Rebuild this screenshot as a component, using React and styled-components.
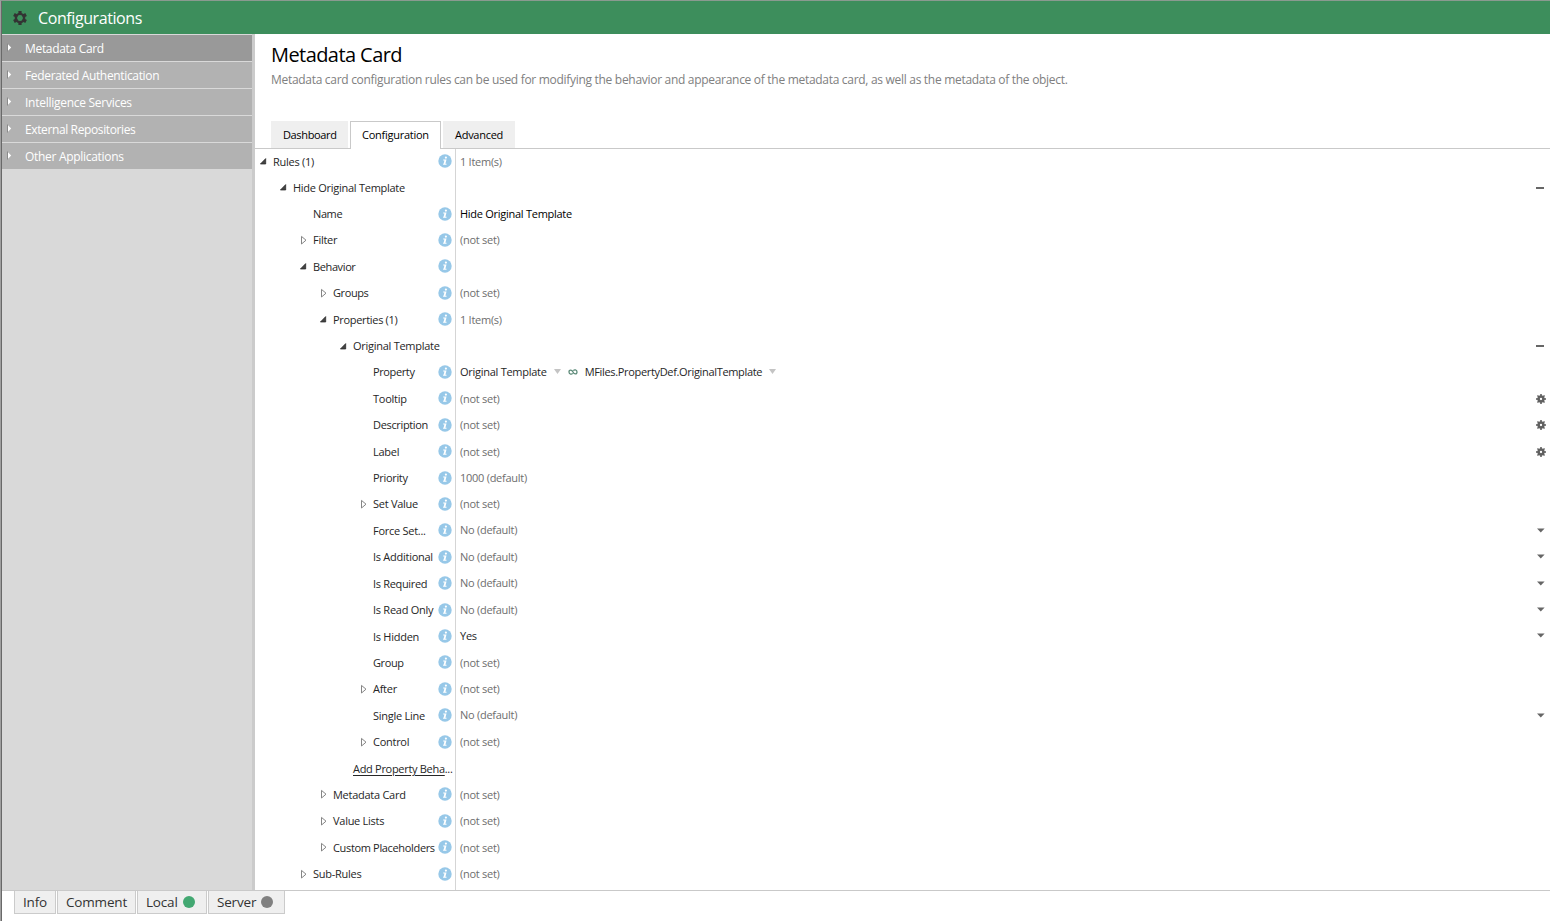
import React from 'react';
import styled, { createGlobalStyle } from 'styled-components';

const GlobalStyle = createGlobalStyle`
  *, *::before, *::after { box-sizing: border-box; }
  body { margin: 0; background: #fff; font-family: "Segoe UI", "Open Sans", sans-serif; }
`;

const Window = styled.div`
  display: flex;
  flex-direction: column;
  width: 100%;
  height: 921px;
  border-top: 1px solid #8a9a90;
  border-left: 1px solid #a0a0a0;
  box-shadow: inset 1px 0 #696969;
  padding-left: 1px;
  overflow: hidden;
`;

const Header = styled.header`
  display: flex;
  align-items: center;
  flex: none;
  height: 33px;
  padding-left: 11px;
  gap: 11px;
  background: #3d8e5c;
  color: #fff;
  font-size: 16px;
  line-height: 32px;
  letter-spacing: -0.41px;
`;

const Body = styled.div`
  display: flex;
  flex: none;
  height: 856px;
`;

const Sidebar = styled.nav`
  flex: none;
  width: 253px;
  padding-top: 1px;
  background: #d9d9d9;
  border-right: 3px solid #cbcbcb;
`;

const SidebarItem = styled.div`
  display: flex;
  align-items: center;
  height: 27px;
  padding-left: 5px;
  border-bottom: 1px solid #d9d9d9;
  background: ${(p) => (p.$active ? '#999' : '#b2b2b2')};
  background-clip: padding-box;
  color: #fff;
  font-size: 12px;
  line-height: 18px;
  padding-top: 1px;
  letter-spacing: ${(p) => p.$tracking}px;
`;

const SidebarArrow = styled.svg`
  flex: none;
  width: 6px;
  height: 9px;
  margin: -3px 12px 0 0;
`;

const Content = styled.main`
  display: flex;
  flex-direction: column;
  flex: 1;
  min-width: 0;
`;

const Title = styled.h1`
  margin: 7px 0 0 16px;
  font-size: 20px;
  font-weight: 400;
  line-height: 28px;
  letter-spacing: -0.57px;
  color: #000;
`;

const Description = styled.p`
  margin: 1px 0 0 16px;
  font-size: 12px;
  line-height: 20px;
  letter-spacing: -0.298px;
  color: #808080;
`;

const TabBar = styled.div`
  display: flex;
  align-items: flex-end;
  flex: none;
  height: 59px;
  padding-left: 16px;
  border-bottom: 1px solid #c9c9c9;
`;

const Tab = styled.div`
  width: ${(p) => p.$width}px;
  height: ${(p) => (p.$active ? 28 : 27)}px;
  margin: 0 2px ${(p) => (p.$active ? -1 : 0)}px 0;
  padding-left: ${(p) => (p.$active ? 11 : 12)}px;
  border: solid #c9c9c9;
  border-width: ${(p) => (p.$active ? '1px 1px 0' : '0')};
  background: ${(p) => (p.$active ? '#fff' : '#efefef')};
  color: #000;
  font-size: 11px;
  line-height: ${(p) => (p.$active ? 26 : 27)}px;
  white-space: nowrap;
  letter-spacing: ${(p) => p.$tracking}px;
`;

const Tree = styled.div`
  display: flex;
  flex-direction: column;
  flex: 1;
  min-height: 0;
  overflow: hidden;
`;

const Row = styled.div`
  display: flex;
  align-items: center;
  flex: none;
  height: 26.41px;
  font-size: 11px;
  line-height: 16px;
  white-space: nowrap;
  letter-spacing: -0.27px;

  &:first-child { height: 25.4px; }
`;

const NameCell = styled.div`
  display: flex;
  align-items: center;
  flex: none;
  width: 201px;
  height: 100%;
  padding-left: ${(p) => 4 + p.$depth * 20}px;
  border-right: 1px solid #d5d5d5;
`;

const TreeEnd = styled.div`
  flex: 1;
  width: 201px;
  border-right: 1px solid #d5d5d5;
`;

const Toggle = styled.svg`
  flex: none;
  width: 14px;
  height: 10px;
  margin-top: -1px;
`;

const Label = styled.span`
  flex: 1;
  min-width: 0;
  color: #262626;
  letter-spacing: ${(p) => p.$tracking || -0.27}px;
`;

const AddLink = styled.span`
  text-decoration: underline;
  text-underline-offset: 2px;
`;

const InfoIcon = styled.svg`
  flex: none;
  width: 14px;
  height: 14px;
  margin: -1px 2.6px 0 0;
`;

const ValueCell = styled.div`
  display: flex;
  align-items: center;
  flex: 1;
  padding-left: 4px;
  padding-bottom: ${(p) => (p.$raised ? 1 : 0)}px;
  color: ${(p) => p.$color};
`;

const PickerText = styled.span`
  letter-spacing: ${(p) => p.$tracking}px;
`;

const PickerArrow = styled.svg`
  width: 7px;
  height: 5px;
  margin: -1px 0 0 7px;
`;

const LinkIcon = styled.svg`
  width: 10px;
  height: 8px;
  margin: 0 7px 0 7px;
`;

const ActionCell = styled.div`
  display: flex;
  justify-content: center;
  flex: none;
  width: 10px;
  margin-right: 4px;
  padding-bottom: ${(p) => (p.$raised ? 1.2 : 0)}px;
`;

const Dash = styled.span`
  width: 8px;
  height: 2px;
  margin-right: 2px;
  background: #666;
`;

const Footer = styled.footer`
  display: flex;
  align-items: flex-start;
  gap: 1px;
  flex: 1;
  padding-left: 12px;
  border-top: 1px solid #c9c9c9;
`;

const StatusTab = styled.div`
  display: flex;
  align-items: center;
  width: ${(p) => p.$width}px;
  height: 23px;
  padding-left: 8px;
  gap: 5px;
  border: 1px solid #cbcbcb;
  border-top: 0;
  background: #efefef;
  color: #333;
  font-size: 13.5px;
  line-height: 20px;
  letter-spacing: -0.18px;
`;

const StatusDot = styled.span`
  width: 12px;
  height: 12px;
  border-radius: 50%;
  background: ${(p) => p.$color};
`;

function Gear({ size, color, teeth, radius, hole, tooth }) {
  return (
    <svg width={size} height={size} viewBox="0 0 14 14">
      {Array.from({ length: teeth }, (_, i) => (
        <rect key={i} x={7 - tooth / 2} y="0" width={tooth} height="4" fill={color}
          transform={`rotate(${(360 / teeth) * i} 7 7)`} />
      ))}
      <circle cx="7" cy="7" r={(radius + hole) / 2} fill="none" stroke={color} strokeWidth={radius - hole} />
    </svg>
  );
}

function Info() {
  return (
    <InfoIcon viewBox="0 0 14 14">
      <circle cx="7" cy="7" r="6.7" fill="#97c8e8" />
      <circle cx="7.9" cy="3.6" r="1.1" fill="#fff" />
      <path d="M5.2 5.6H8.5L7.4 9.7H8.5V10.7H5.1V9.7H5.6L6.4 6.6H5.2Z" fill="#fff" />
    </InfoIcon>
  );
}

function TreeToggle({ state }) {
  return (
    <Toggle viewBox="0 0 14 10">
      {state === 'open' && <path d="M6.7 2.6V8H1.4Z" fill="#444" stroke="#222" strokeWidth=".7" />}
      {state === 'closed' && <path d="M2.5 1.4V9L7 5.2Z" fill="#fff" stroke="#858585" />}
    </Toggle>
  );
}

function Action({ type }) {
  return (
    <ActionCell $raised={type === 'select'}>
      {type === 'remove' && <Dash />}
      {type === 'gear' && <Gear size={10} color="#606060" teeth={8} radius={5.2} hole={1.6} tooth={2.2} />}
      {type === 'select' && (
        <svg width="8" height="5" viewBox="0 0 8 5"><path d="M0 .5H7.6L3.8 4.6Z" fill="#666" /></svg>
      )}
    </ActionCell>
  );
}

function Picker({ tracking, children }) {
  return (
    <>
      <PickerText $tracking={tracking}>{children}</PickerText>
      <PickerArrow viewBox="0 0 7 5"><path d="M0 0H7L3.5 5Z" fill="#c4c4c4" /></PickerArrow>
    </>
  );
}

const sections = [
  { name: 'Metadata Card', tracking: -0.32, active: true },
  { name: 'Federated Authentication', tracking: -0.34 },
  { name: 'Intelligence Services', tracking: -0.27 },
  { name: 'External Repositories', tracking: -0.38 },
  { name: 'Other Applications', tracking: -0.3 },
];

const N = '(not set)';
const D = 'No (default)';
const rows = [
  { depth: 0, label: 'Rules (1)', toggle: 'open', value: '1 Item(s)' },
  { depth: 1, label: 'Hide Original Template', toggle: 'open', noInfo: true, action: 'remove' },
  { depth: 2, label: 'Name', value: 'Hide Original Template', color: '#000', tracking: -0.4 },
  { depth: 2, label: 'Filter', toggle: 'closed', value: N },
  { depth: 2, label: 'Behavior', toggle: 'open', tracking: -0.38 },
  { depth: 3, label: 'Groups', toggle: 'closed', value: N, tracking: -0.4 },
  { depth: 3, label: 'Properties (1)', toggle: 'open', value: '1 Item(s)', tracking: -0.32 },
  { depth: 4, label: 'Original Template', toggle: 'open', noInfo: true, action: 'remove' },
  { depth: 5, label: 'Property', pair: ['Original Template', 'MFiles.PropertyDef.OriginalTemplate'], color: '#262626', tracking: -0.38 },
  { depth: 5, label: 'Tooltip', value: N, action: 'gear' },
  { depth: 5, label: 'Description', value: N, action: 'gear', tracking: -0.34 },
  { depth: 5, label: 'Label', value: N, action: 'gear' },
  { depth: 5, label: 'Priority', value: '1000 (default)', tracking: -0.32 },
  { depth: 5, label: 'Set Value', toggle: 'closed', value: N },
  { depth: 5, label: 'Force Set...', value: D, action: 'select' },
  { depth: 5, label: 'Is Additional', value: D, action: 'select' },
  { depth: 5, label: 'Is Required', value: D, action: 'select', tracking: -0.32 },
  { depth: 5, label: 'Is Read Only', value: D, action: 'select' },
  { depth: 5, label: 'Is Hidden', value: 'Yes', color: '#262626', action: 'select' },
  { depth: 5, label: 'Group', value: N, tracking: -0.4 },
  { depth: 5, label: 'After', toggle: 'closed', value: N },
  { depth: 5, label: 'Single Line', value: D, action: 'select' },
  { depth: 5, label: 'Control', toggle: 'closed', value: N },
  { depth: 4, label: 'Add Property Beha', link: true, noInfo: true, tracking: -0.3 },
  { depth: 3, label: 'Metadata Card', toggle: 'closed', value: N },
  { depth: 3, label: 'Value Lists', toggle: 'closed', value: N },
  { depth: 3, label: 'Custom Placeholders', toggle: 'closed', value: N, tracking: -0.34 },
  { depth: 2, label: 'Sub-Rules', toggle: 'closed', value: N },
];

function TreeRow({ row }) {
  return (
    <Row>
      <NameCell $depth={row.depth}>
        <TreeToggle state={row.toggle} />
        <Label $tracking={row.tracking}>
          {row.link ? <><AddLink>{row.label}</AddLink>...</> : row.label}
        </Label>
        {!row.noInfo && <Info />}
      </NameCell>
      <ValueCell $color={row.color || '#6e6e6e'} $raised={row.action === 'select'}>
        {row.value}
        {row.pair && (
          <>
            <Picker tracking={-0.27}>{row.pair[0]}</Picker>
            <LinkIcon viewBox="0 0 10 8">
              <path d="M4.6 5.2C3.9 6.6 1 6.6 1 4S3.9 1.4 5 4S9 6.6 9 4S6.1 1.4 5.4 2.8" fill="none" stroke="#5c8a78" strokeWidth="1.3" />
            </LinkIcon>
            <Picker tracking={-0.33}>{row.pair[1]}</Picker>
          </>
        )}
      </ValueCell>
      <Action type={row.action} />
    </Row>
  );
}

export default function App() {
  return (
    <>
      <GlobalStyle />
      <Window>
        <Header>
          <Gear size={14} color="#333" teeth={6} radius={5.3} hole={2.9} tooth={3.2} />
          <span>Configurations</span>
        </Header>
        <Body>
          <Sidebar>
            {sections.map((s) => (
              <SidebarItem key={s.name} $active={s.active} $tracking={s.tracking}>
                <SidebarArrow viewBox="0 0 6 9">
                  <path d="M.5 .5V8.5" stroke="#8a8a8a" />
                  <path d="M1 1.2V7.8L4.2 4.5Z" fill="#fff" />
                </SidebarArrow>
                {s.name}
              </SidebarItem>
            ))}
          </Sidebar>
          <Content>
            <Title>Metadata Card</Title>
            <Description>
              Metadata card configuration rules can be used for modifying the behavior and appearance of the metadata card, as well as the metadata of the object.
            </Description>
            <TabBar>
              <Tab $width={77} $tracking={-0.36}>Dashboard</Tab>
              <Tab $width={91} $tracking={-0.26} $active>Configuration</Tab>
              <Tab $width={72} $tracking={-0.28}>Advanced</Tab>
            </TabBar>
            <Tree>
              {rows.map((row, i) => <TreeRow key={i} row={row} />)}
              <TreeEnd />
            </Tree>
          </Content>
        </Body>
        <Footer>
          <StatusTab $width={42}>Info</StatusTab>
          <StatusTab $width={79}>Comment</StatusTab>
          <StatusTab $width={70}>Local<StatusDot $color="#43a872" /></StatusTab>
          <StatusTab $width={77}>Server<StatusDot $color="#808080" /></StatusTab>
        </Footer>
      </Window>
    </>
  );
}
